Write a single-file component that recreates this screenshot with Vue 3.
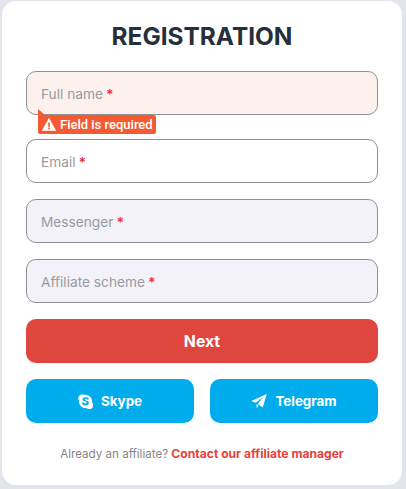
<template>
  <div class="page">
    <form class="card" @submit.prevent>
      <h1 class="title">REGISTRATION</h1>
      <div class="fields">
        <div v-for="f in fields" :key="f.label" class="field" :class="f.kind">
          <span class="label">{{ f.label }}</span><span class="star">*</span>
          <div v-if="f.error" class="error">
            <svg class="warn" viewBox="0 0 14 13" width="14" height="13">
              <path d="M7 0.5 13.8 12.6H.2Z" fill="#fff" stroke="#fff" stroke-width=".6" stroke-linejoin="round" />
              <rect x="6.2" y="4.4" width="1.6" height="4.4" fill="#f55a33" />
              <rect x="6.2" y="9.6" width="1.6" height="1.6" fill="#f55a33" />
            </svg>
            <span>{{ f.error }}</span>
          </div>
        </div>
        <button class="next" type="button">Next</button>
        <div class="socials">
          <button class="social" type="button">
            <svg viewBox="0 0 16 16" width="15" height="15">
              <path fill="#fff" fill-rule="evenodd" d="M4.6.6A4 4 0 0 1 7 .9a7.2 7.2 0 0 1 8.1 8.1 4 4 0 0 1-5.9 6 7.2 7.2 0 0 1-8.200-8A4 4 0 0 1 4.600.6ZM8.100 3.400C6.100 3.400 4.900 4.400 4.900 5.700 4.900 8.500 9.300 7.500 9.300 9.100 9.300 9.700 8.700 10.100 7.900 10.100 6.300 10.100 6.400 8.700 5.200 8.700 4.700 8.700 4.300 9.100 4.300 9.600 4.300 10.800 5.800 12.200 8 12.200 10.200 12.200 11.600 11.100 11.600 9.500 11.600 6.500 7.100 7.400 7.100 5.900 7.100 5.400 7.600 5.100 8.200 5.100 9.500 5.100 9.500 6.200 10.600 6.200 11.100 6.200 11.500 5.800 11.500 5.300 11.500 4.200 9.900 3.400 8.100 3.400Z" />
            </svg>
            <span>Skype</span>
          </button>
          <button class="social" type="button">
            <svg viewBox="0 0 16 16" width="16" height="16">
              <path fill="#fff" d="M15.800 1 .3 7.900 4.600 9.800 12.500 4 6.700 10.800 11.700 14.600Z" />
              <path fill="#fff" d="M5.400 11 5.700 15 7.800 12.800Z" />
            </svg>
            <span>Telegram</span>
          </button>
        </div>
      </div>
      <p class="foot">Already an affiliate? <a class="link">Contact our affiliate manager</a></p>
    </form>
  </div>
</template>

<script setup>
const fields = [
  { label: 'Full name', kind: 'invalid', error: 'Field is required' },
  { label: 'Email', kind: 'plain' },
  { label: 'Messenger', kind: 'muted' },
  { label: 'Affiliate scheme', kind: 'muted' }
]
</script>

<style>
html, body { margin: 0; background: #e4e4ec; }
</style>

<style scoped>
.page {
  width: 406px;
  height: 489px;
  box-sizing: border-box;
  padding: 1px 4px 4px 2px;
  background: #e4e4ec;
  font-family: Inter, "Noto Sans", sans-serif;
}
.card {
  height: 484px;
  box-sizing: border-box;
  padding: 19px 24px 0;
  background: #fff;
  border-radius: 14px;
}
.title {
  margin: 0 0 19px;
  height: 32px;
  font-size: 24.4px;
  line-height: 32px;
  font-weight: 700;
  text-align: center;
  color: #25303d;
}
.fields { display: flex; flex-direction: column; }
.field {
  position: relative;
  height: 44px;
  box-sizing: border-box;
  display: flex;
  align-items: center;
  padding: 1px 14px 0;
  margin-bottom: 16px;
  border: 1px solid #8f8f95;
  border-radius: 10px;
  font-size: 13.7px;
  color: #9a9aa2;
}
.invalid { background: #fdf1ed; margin-bottom: 24px; }
.plain { background: #fff; }
.muted { background: #f2f2f8; }
.star { margin-left: 3px; color: #f0353b; font-weight: 700; }
.error {
  position: absolute;
  left: 11px;
  top: 43px;
  height: 19px;
  display: flex;
  align-items: center;
  gap: 4px;
  padding: 0 3px 0 4px;
  background: #f55a33;
  border-radius: 0 2px 2px 2px;
  font-family: Roboto, sans-serif;
  font-size: 13px;
  font-weight: 500;
  white-space: nowrap;
  color: #fff;
}
.error::before {
  content: "";
  position: absolute;
  left: 0;
  top: -6px;
  border-left: 0 solid transparent;
  border-right: 7px solid transparent;
  border-bottom: 6px solid #f55a33;
}
.warn { flex: none; }
button {
  border: 0;
  font-family: Inter, "Noto Sans", sans-serif;
  color: #fff;
  cursor: pointer;
}
.next {
  height: 44px;
  margin-bottom: 16px;
  border-radius: 10px;
  background: #df463e;
  font-size: 15.8px;
  font-weight: 700;
}
.socials {
  display: grid;
  grid-template-columns: 1fr 1fr;
  gap: 16px;
}
.social {
  height: 44px;
  display: flex;
  align-items: center;
  justify-content: center;
  gap: 8px;
  border-radius: 10px;
  background: #00aceb;
  font-size: 13.4px;
  font-weight: 700;
}
.foot {
  margin: 23px 0 0;
  font-size: 11.6px;
  line-height: 16px;
  text-align: center;
  color: #85858d;
}
.link { color: #e8403a; font-size: 12.1px; font-weight: 700; }
</style>
